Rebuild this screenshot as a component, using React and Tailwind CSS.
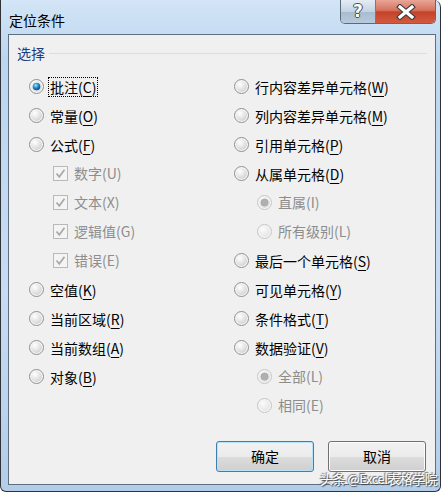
const font = { fontFamily: '"Noto Sans CJK SC", "Noto Sans", sans-serif' };

function Radio({ checked, disabled }) {
  const id = checked ? "rg-on" : disabled ? "rg-dis" : "rg-off";
  return (
    <svg width="15" height="15" viewBox="0 0 15 15" className="shrink-0">
      <defs>
        <radialGradient id="rg-off" cx="0.35" cy="0.3" r="0.8">
          <stop offset="0" stopColor="#ffffff" />
          <stop offset="1" stopColor="#d0d0d0" />
        </radialGradient>
        <radialGradient id="rg-dis" cx="0.35" cy="0.3" r="0.8">
          <stop offset="0" stopColor="#fbfbfb" />
          <stop offset="1" stopColor="#e4e4e4" />
        </radialGradient>
        <radialGradient id="rg-dot" cx="0.4" cy="0.35" r="0.7">
          <stop offset="0" stopColor="#a6e6ff" />
          <stop offset="0.5" stopColor="#1c8ad1" />
          <stop offset="1" stopColor="#0b3f74" />
        </radialGradient>
        <radialGradient id="rg-on" cx="0.35" cy="0.3" r="0.8">
          <stop offset="0" stopColor="#ffffff" />
          <stop offset="1" stopColor="#d8d8d8" />
        </radialGradient>
      </defs>
      <circle cx="7.5" cy="7.5" r="7" fill="#f6f6f6" stroke={disabled ? "#c4c4c4" : "#8f8f8f"} />
      <circle cx="7.5" cy="7.5" r="5.4" fill={`url(#${id})`} />
      {checked && !disabled && <circle cx="7.5" cy="7.5" r="3.8" fill="url(#rg-dot)" />}
      {disabled && checked && <circle cx="7.5" cy="7.5" r="3.6" fill="#b0b0b0" stroke="#9c9c9c" strokeWidth="0.6" />}
    </svg>
  );
}

function Check() {
  return (
    <svg width="15" height="15" viewBox="0 0 15 15" className="shrink-0">
      <rect x="0.5" y="0.5" width="14" height="14" fill="#f4f4f4" stroke="#b9b9b9" />
      <path d="M3.5 7.5 L6.3 10.8 L11.5 3.8" fill="none" stroke="#a8a8a8" strokeWidth="1.7" />
    </svg>
  );
}

function Key({ k }) {
  return (
    <>
      (<span className="underline underline-offset-[3px] decoration-1">{k}</span>)
    </>
  );
}

function Row({ label, k, checked, focus }) {
  return (
    <div className="h-[29px] flex items-center gap-[5px]">
      <Radio checked={checked} />
      <span className={`text-[14px] text-black leading-[18px] px-[1px] ${focus ? "outline outline-1 outline-dotted outline-black" : ""}`}>
        {label}
        <Key k={k} />
      </span>
    </div>
  );
}

function SubRadio({ label, checked }) {
  return (
    <div className="h-[29px] flex items-center gap-[6px] pl-[23px]">
      <Radio checked={checked} disabled />
      <span className="text-[14px] text-[#8d8d8d]">{label}</span>
    </div>
  );
}

function SubCheck({ label }) {
  return (
    <div className="h-[29px] flex items-center gap-[6px] pl-[24px]">
      <Check />
      <span className="text-[14px] text-[#8d8d8d]">{label}</span>
    </div>
  );
}

export default function App() {
  return (
    <div className="w-[444px] h-[494px] bg-white relative" style={font}>
      <div className="w-[441px] h-[492px] border-x border-b border-[#2f3338] rounded-b-[6px] rounded-tr-[7px] bg-[linear-gradient(to_bottom,#d3e5f6,#bcd6f0_12%,#c6dcf2_60%,#b3cde9)] flex flex-col">
        {/* title bar */}
        <div className="h-[34px] flex items-start relative">
          <span className="pl-[8px] pt-[11px] text-[14px] text-black leading-[18px]">定位条件</span>
          <div className="absolute top-0 right-[4px] flex h-[24px] rounded-b-[5px] border border-t-0 border-[#5b6b7c] overflow-hidden">
            <div className="w-[35px] flex items-center justify-center bg-[linear-gradient(to_bottom,#e4ecf5,#c4d3e3_50%,#a8bbd0_51%,#b8cadc)] border-r border-[#6d7d8e]">
              <span className="text-white font-bold text-[17px] leading-none [text-shadow:0_0_1px_#333,1px_0_0_#555,-1px_0_0_#555,0_1px_0_#555,0_-1px_0_#555]" style={{ fontFamily: '"DejaVu Sans", sans-serif' }}>?</span>
            </div>
            <div className="w-[59px] flex items-center justify-center bg-[linear-gradient(to_bottom,#e9a697,#d5725d_45%,#c4432a_52%,#d35a3f)]">
              <svg width="22" height="16" viewBox="0 0 22 16">
                <path d="M5 3 L17 13 M17 3 L5 13" stroke="#3a3a3a" strokeWidth="5.4" strokeLinecap="square" />
                <path d="M5 3 L17 13 M17 3 L5 13" stroke="#ffffff" strokeWidth="3.2" strokeLinecap="square" />
              </svg>
            </div>
          </div>
        </div>

        {/* client */}
        <div className="ml-[7px] mr-[4px] h-[451px] border border-[#5f6f80] bg-[#f0f0f0] flex flex-col">
          <div className="flex items-center mt-[9px] pl-[8px] pr-[8px] h-[18px]">
            <span className="text-[14px] text-[#1c3d80] leading-[18px]">选择</span>
            <div className="flex-1 h-px bg-[#d5dfe5] ml-[4px] mt-[1px]" />
          </div>

          <div className="flex mt-[10px]">
            <div className="w-[225px] pl-[20px] flex flex-col">
              <Row label="批注" k="C" checked focus />
              <Row label="常量" k="O" />
              <Row label="公式" k="F" />
              <SubCheck label="数字(U)" />
              <SubCheck label="文本(X)" />
              <SubCheck label="逻辑值(G)" />
              <SubCheck label="错误(E)" />
              <Row label="空值" k="K" />
              <Row label="当前区域" k="R" />
              <Row label="当前数组" k="A" />
              <Row label="对象" k="B" />
            </div>
            <div className="flex-1 flex flex-col">
              <Row label="行内容差异单元格" k="W" />
              <Row label="列内容差异单元格" k="M" />
              <Row label="引用单元格" k="P" />
              <Row label="从属单元格" k="D" />
              <SubRadio label="直属(I)" checked />
              <SubRadio label="所有级别(L)" />
              <Row label="最后一个单元格" k="S" />
              <Row label="可见单元格" k="Y" />
              <Row label="条件格式" k="T" />
              <Row label="数据验证" k="V" />
              <SubRadio label="全部(L)" checked />
              <SubRadio label="相同(E)" />
            </div>
          </div>

          <div className="flex justify-end gap-[14px] pr-[9px] mt-[21px]">
            <button className="w-[98px] h-[31px] rounded-[3px] border border-[#3c7fb1] bg-[linear-gradient(to_bottom,#f2f2f2,#ebebeb_50%,#dddddd_51%,#cfcfcf)] shadow-[inset_0_0_0_1px_#b8e2f7] text-[14px] text-black">
              确定
            </button>
            <button className="w-[98px] h-[31px] rounded-[3px] border border-[#707070] bg-[linear-gradient(to_bottom,#f2f2f2,#ebebeb_50%,#dddddd_51%,#cfcfcf)] shadow-[inset_0_0_0_1px_#fcfcfc] text-[14px] text-black">
              取消
            </button>
          </div>
        </div>
      </div>

      {/* watermark */}
      <div className="absolute left-[320px] top-[471px] text-[13px] leading-[16px] text-white tracking-[-0.5px] [text-shadow:1px_1px_1px_#444,-1px_-1px_1px_#666]">
        头条 @Excel表格学院
      </div>
    </div>
  );
}
